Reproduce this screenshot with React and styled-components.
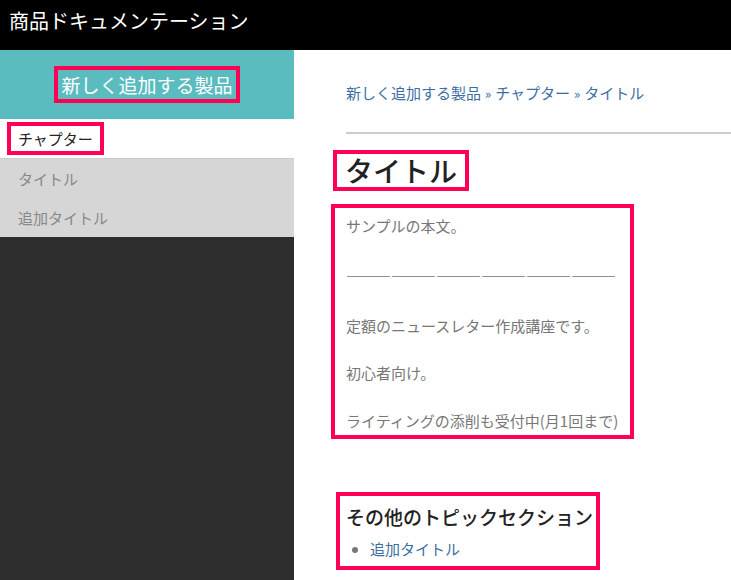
import React from "react";
import styled, { createGlobalStyle } from "styled-components";

const Global = createGlobalStyle`
  html, body { margin: 0; padding: 0; height: 100%; }
  body { font-family: "Noto Sans CJK JP", "Noto Sans", sans-serif; background: #fff; overflow: hidden; }
`;

const Page = styled.div` width: 731px; height: 580px; display: flex; flex-direction: column; `;
const Header = styled.header`
  height: 50px; background: #000; color: #fff; font-size: 20px;
  padding: 0 9px; line-height: 42px; box-sizing: border-box; flex-shrink: 0;
`;
const Body = styled.div` flex: 1; display: flex; min-height: 0; `;
const Side = styled.aside` width: 294px; background: #2d2d2d; flex-shrink: 0; `;
const Product = styled.div`
  height: 69px; background: #5bbcbf; display: flex; justify-content: center; align-items: center;
`;
const Mark = styled.span`
  border: 4px solid #ff0055; padding: ${p => p.$pad || "0"};
  display: inline-block; box-sizing: border-box;
`;
const ProductText = styled(Mark)` color: #fff; font-size: 19px; line-height: 29px; padding: 0 3px; `;
const Chapter = styled.div`
  height: 40px; background: #fff; border-bottom: 1px solid #ccc; box-sizing: border-box;
  display: flex; align-items: center; padding-left: 7px;
`;
const ChapterText = styled(Mark)` font-size: 15px; color: #222; line-height: 25px; padding: 0 7px; `;
const Item = styled.div`
  height: 39px; background: #d6d6d6; color: #888; font-size: 15px;
  display: flex; align-items: center; padding-left: 18px;
`;
const Main = styled.main` flex: 1; padding: 30px 0 0 52px; `;
const Crumbs = styled.div` color: #3d6ea3; font-size: 15px; line-height: 26px; padding-bottom: 25px; border-bottom: 2px solid #ccc; `;
const Sep = styled.span` font-size: 13px; color: #3d6ea3; margin: 0 4px; `;
const Title = styled(Mark)`
  margin: 16px 0 0 -13px; font-size: 28px; color: #222; line-height: 33px; padding: 0 8px; font-weight: 500;
`;
const Content = styled.div`
  margin: 13px 0 0 -15px; width: 303px; height: 235px; box-sizing: border-box;
  border: 4px solid #ff0055; padding: 5px 0 0 11px; color: #777; font-size: 15px;
`;
const P = styled.p` margin: 0; line-height: 26px; height: ${p => p.$h || 48}px; `;
const Other = styled.div`
  margin: 53px 0 0 -10px; width: 264px; height: 78px; box-sizing: border-box;
  border: 4px solid #ff0055; padding: 7px 0 0 6px;
`;
const H2 = styled.h2` margin: 0; font-size: 19px; font-weight: 500; color: #222; line-height: 27px; `;
const List = styled.ul` margin: 8px 0 0; padding-left: 24px; color: #777; font-size: 15px; line-height: 22px; li { color: #777; } `;
const Link = styled.span` color: #3d6ea3; `;

export default function App() {
  return (
    <Page>
      <Global />
      <Header>商品ドキュメンテーション</Header>
      <Body>
        <Side>
          <Product><ProductText>新しく追加する製品</ProductText></Product>
          <Chapter><ChapterText>チャプター</ChapterText></Chapter>
          <Item>タイトル</Item>
          <Item>追加タイトル</Item>
        </Side>
        <Main>
          <Crumbs>新しく追加する製品<Sep>»</Sep>チャプター<Sep>»</Sep>タイトル</Crumbs>
          <Title>タイトル</Title>
          <Content>
            <P $h={50}>サンプルの本文。</P>
            <P $h={50}>――――――――――――――――――</P>
            <P $h={47}>定額のニュースレター作成講座です。</P>
            <P $h={48}>初心者向け。</P>
            <P>ライティングの添削も受付中(月1回まで)</P>
          </Content>
          <Other>
            <H2>その他のトピックセクション</H2>
            <List><li><Link>追加タイトル</Link></li></List>
          </Other>
        </Main>
      </Body>
    </Page>
  );
}
